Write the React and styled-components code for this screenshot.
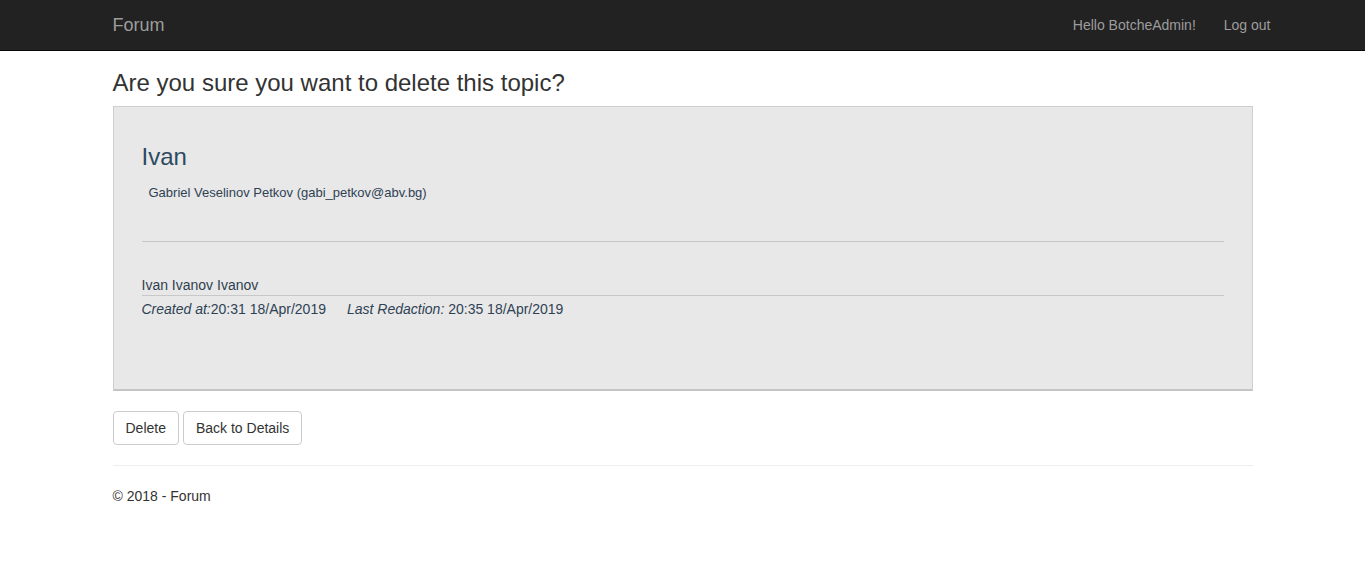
import * as React from "react";
import styled, { createGlobalStyle } from "styled-components";

const Global = createGlobalStyle`
  html, body { margin: 0; padding: 0; background: #fff; }
  body {
    font-family: "Liberation Sans", Arial, sans-serif;
    font-size: 14px;
    line-height: 1.42857;
    color: #333;
  }
`;

const Navbar = styled.nav`
  height: 51px;
  background: #222;
  border-bottom: 1px solid #080808;
  box-sizing: border-box;
`;

const NavInner = styled.div`
  width: 1140px;
  margin: 0 auto;
  height: 100%;
  display: flex;
  align-items: center;
  justify-content: space-between;
`;

const Brand = styled.a`
  font-size: 18px;
  color: #9d9d9d;
  line-height: 20px;
`;

const NavLinks = styled.div`
  display: flex;
  align-items: center;
  gap: 28px;
  margin-right: -18px;
`;

const NavLink = styled.a`
  font-size: 14px;
  color: #9d9d9d;
  line-height: 20px;
`;

const Container = styled.main`
  width: 1140px;
  margin: 0 auto;
`;

const Title = styled.h3`
  font-size: 24px;
  font-weight: 400;
  line-height: 26.4px;
  margin: 19px 0 10px;
  color: #333;
`;

const Panel = styled.section`
  box-sizing: border-box;
  background: #e8e8e8;
  border: 1px solid #cfcfcf;
  border-bottom: 2px solid #c4c4c4;
  padding: 37px 28px 0;
  height: 285px;
  color: #2f4254;
`;

const TopicName = styled.h3`
  font-size: 24px;
  font-weight: 400;
  line-height: 26.4px;
  margin: 0 0 13px;
  color: #2e4a61;
`;

const Author = styled.div`
  font-size: 13px;
  line-height: 18px;
  padding-left: 7px;
  color: #2f4254;
`;

const Rule = styled.hr`
  border: 0;
  border-top: 1px solid #c8c8c8;
  margin: 39px 0 33px;
`;

const Content = styled.div`
  font-size: 14px;
  line-height: 20px;
  border-bottom: 1px solid #c8c8c8;
  color: #2f3f4e;
`;

const Meta = styled.div`
  display: flex;
  gap: 21px;
  margin-top: 3px;
  font-size: 14px;
  line-height: 20px;
  color: #2f4254;
`;

const Label = styled.em`
  font-style: italic;
`;

const Actions = styled.div`
  display: flex;
  gap: 4px;
  margin-top: 20px;
`;

const Button = styled.button`
  height: 34px;
  padding: 6px 12px;
  font-family: inherit;
  font-size: 14px;
  line-height: 20px;
  color: #333;
  background: #fff;
  border: 1px solid #ccc;
  border-radius: 4px;
  cursor: pointer;
`;

const FooterRule = styled.hr`
  border: 0;
  border-top: 1px solid #eee;
  margin: 20px 0 20px;
`;

const Footer = styled.footer`
  font-size: 14px;
  line-height: 20px;
  color: #333;
`;

export default function App() {
  return (
    <>
      <Global />
      <Navbar>
        <NavInner>
          <Brand>Forum</Brand>
          <NavLinks>
            <NavLink>Hello BotcheAdmin!</NavLink>
            <NavLink>Log out</NavLink>
          </NavLinks>
        </NavInner>
      </Navbar>
      <Container>
        <Title>Are you sure you want to delete this topic?</Title>
        <Panel>
          <TopicName>Ivan</TopicName>
          <Author>Gabriel Veselinov Petkov (gabi_petkov@abv.bg)</Author>
          <Rule />
          <Content>Ivan Ivanov Ivanov</Content>
          <Meta>
            <span>
              <Label>Created at:</Label>20:31 18/Apr/2019
            </span>
            <span>
              <Label>Last Redaction:</Label> 20:35 18/Apr/2019
            </span>
          </Meta>
        </Panel>
        <Actions>
          <Button>Delete</Button>
          <Button>Back to Details</Button>
        </Actions>
        <FooterRule />
        <Footer>© 2018 - Forum</Footer>
      </Container>
    </>
  );
}
